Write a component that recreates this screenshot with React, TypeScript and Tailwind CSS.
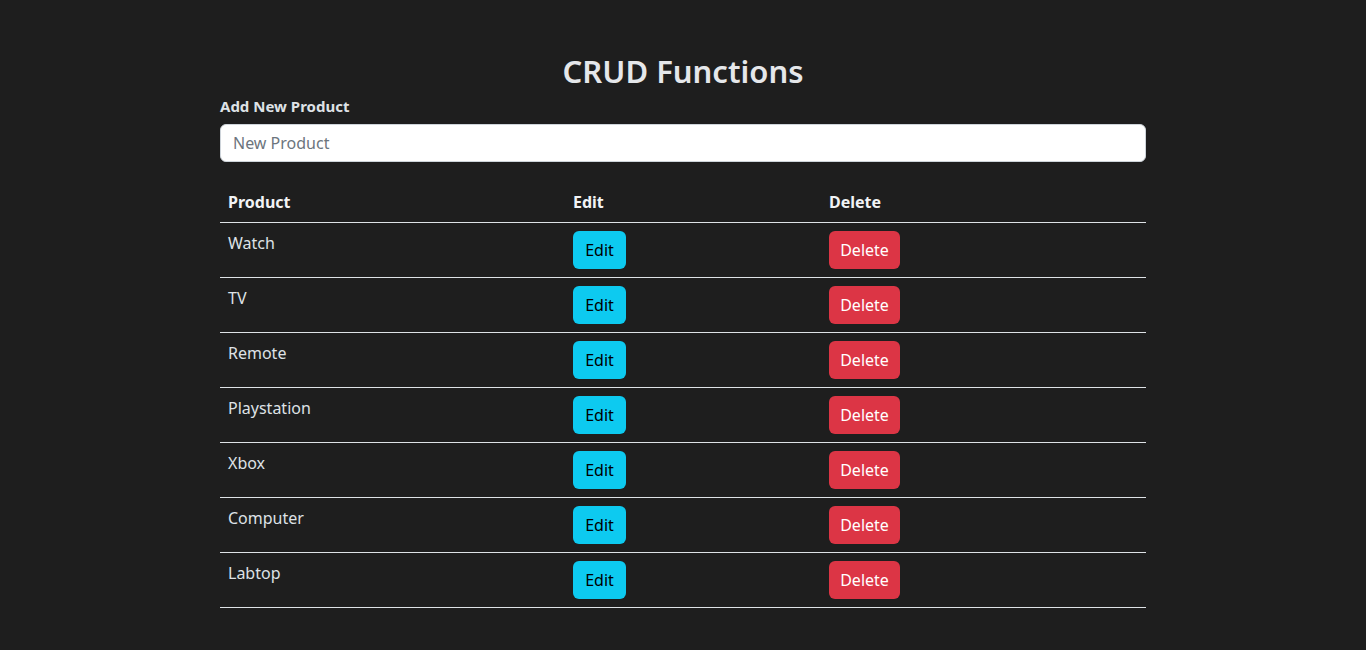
import { useState } from 'react';

const initialProducts = ['Watch', 'TV', 'Remote', 'Playstation', 'Xbox', 'Computer', 'Labtop'];

export default function App() {
  const [products] = useState(initialProducts);
  const [newProduct, setNewProduct] = useState('');

  return (
    <div className="min-h-[650px] bg-[#1e1e1e] text-[#dee2e6]" style={{ fontFamily: '"Noto Sans", "Open Sans", sans-serif' }}>
      <div className="mx-auto w-[926px] pt-[51px]">
        <h2 className="text-center text-[31px] font-semibold leading-[40px] text-[#e5e7ea]">CRUD Functions</h2>
        <label htmlFor="new-product" className="mt-[3px] block text-[15px] font-bold leading-[24px]">
          Add New Product
        </label>
        <input
          id="new-product"
          type="text"
          value={newProduct}
          onChange={e => setNewProduct(e.target.value)}
          placeholder="New Product"
          className="mt-[6px] block h-[38px] w-full rounded-md border border-[#ced4da] bg-white px-3 text-base text-[#212529] placeholder:text-[#6c757d] outline-none"
        />
        <table className="mt-[20px] w-full border-collapse text-base">
          <colgroup>
            <col className="w-[345px]" />
            <col className="w-[256px]" />
            <col className="w-[325px]" />
          </colgroup>
          <thead>
            <tr className="border-b border-[#dee2e6]">
              <th className="p-2 text-left font-bold leading-6 text-[#f1f3f5]">Product</th>
              <th className="p-2 text-left font-bold leading-6 text-[#f1f3f5]">Edit</th>
              <th className="p-2 text-left font-bold leading-6 text-[#f1f3f5]">Delete</th>
            </tr>
          </thead>
          <tbody>
            {products.map(product => (
              <tr key={product} className="border-b border-[#dee2e6]">
                <td className="p-2 align-top leading-6">{product}</td>
                <td className="p-2 align-top">
                  <button className="h-[38px] w-[53px] rounded-md bg-[#0dcaf0] text-base leading-6 text-black">Edit</button>
                </td>
                <td className="p-2 align-top">
                  <button className="h-[38px] w-[71px] rounded-md bg-[#dc3545] text-base leading-6 text-white">Delete</button>
                </td>
              </tr>
            ))}
          </tbody>
        </table>
      </div>
    </div>
  );
}
